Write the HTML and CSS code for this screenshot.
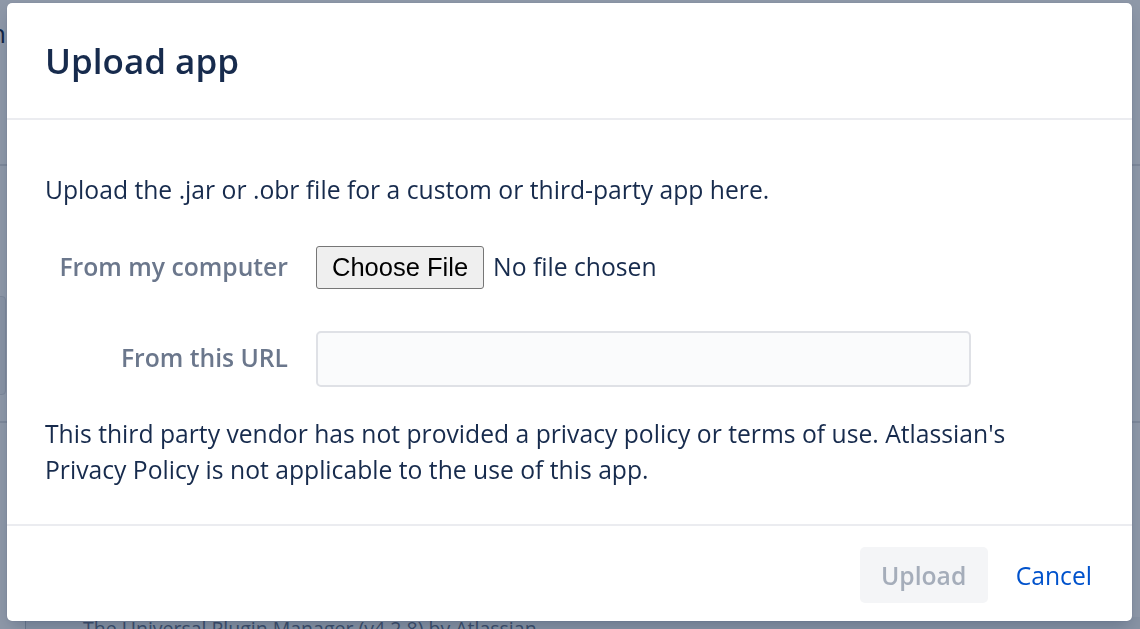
FILE: index.html
```html
<!DOCTYPE html>
<html lang="en">
<head>
<meta charset="utf-8">
<title>Upload app</title>
<link rel="stylesheet" href="styles.css">
</head>
<body>
<div class="page">
  <header class="page-header">
    <div class="page-title-wrap">
      <h1 class="page-title">Administration</h1>
    </div>
  </header>
  <main class="page-main">
    <div class="side-card"></div>
    <div class="main-rule"></div>
  </main>
  <footer class="page-footer">
    <p class="page-footer-text">The Universal Plugin Manager (v4.2.8) by Atlassian</p>
  </footer>
</div>
<div class="blanket"></div>
<section class="dialog" role="dialog" aria-labelledby="dlg-title">
  <header class="dialog-header">
    <h2 class="dialog-title" id="dlg-title">Upload app</h2>
  </header>
  <div class="dialog-body">
    <p class="intro">Upload the .jar or .obr file for a custom or third-party app here.</p>
    <form class="upload-form">
      <div class="form-row">
        <label class="form-label" for="file-input">From my computer</label>
        <input class="file-input" id="file-input" type="file">
      </div>
      <div class="form-row">
        <label class="form-label" for="url-input">From this URL</label>
        <input class="url-input" id="url-input" type="text">
      </div>
    </form>
    <p class="notice">This third party vendor has not provided a privacy policy or terms of use. Atlassian's Privacy Policy is not applicable to the use of this app.</p>
  </div>
  <footer class="dialog-footer">
    <button class="btn btn-disabled" type="button" disabled>Upload</button>
    <button class="btn btn-link" type="button">Cancel</button>
  </footer>
</section>
</body>
</html>
```

FILE: styles.css
```css
html, body {
  margin: 0;
  padding: 0;
  width: 1140px;
  height: 629px;
  overflow: hidden;
  background: #ffffff;
  font-family: "Open Sans", "Noto Sans", sans-serif;
  color: #172b4d;
}

/* underlying page */
.page {
  width: 1140px;
  height: 629px;
  display: flex;
  flex-direction: column;
}
.page-header {
  height: 146px;
  border-bottom: 2px solid #dfe1e6;
  padding-top: 18px;
  box-sizing: content-box;
}
.page-title-wrap {
  width: 6px;
  display: flex;
  justify-content: flex-end;
}
.page-title {
  margin: 0;
  font-size: 26px;
  font-weight: 500;
  line-height: 30px;
  white-space: nowrap;
  color: #172b4d;
}
.page-main {
  flex: 1;
  position: relative;
}
.side-card {
  position: absolute;
  left: -20px;
  top: 130px;
  width: 24px;
  height: 97px;
  border: 1px solid #dfe1e6;
  border-radius: 4px;
  background: #f4f5f7;
}
.main-rule {
  position: absolute;
  left: 0;
  right: 0;
  top: 255px;
  border-top: 2px solid #dfe1e6;
}
.page-footer {
  height: 12px;
  background: #f4f5f7;
  border-left: 1px solid #c1c7d0;
  margin-left: 25px;
  overflow: hidden;
}
.page-footer-text {
  margin: 0 0 0 57px;
  font-size: 19.5px;
  line-height: 24px;
  color: #6b778c;
}

/* blanket */
.blanket {
  position: fixed;
  inset: 0;
  background: rgba(9, 30, 66, 0.46);
}

/* dialog */
.dialog {
  position: absolute;
  left: 7px;
  top: 3px;
  width: 1125px;
  height: 618px;
  background: #ffffff;
  border-radius: 5px;
  display: flex;
  flex-direction: column;
  box-shadow: 0 0 1px rgba(9, 30, 66, 0.31), 0 8px 16px -4px rgba(9, 30, 66, 0.25);
}
.dialog-header {
  height: 115px;
  padding: 0 38px;
  display: flex;
  align-items: center;
  border-bottom: 2px solid #ebecf0;
}
.dialog-title {
  margin: 0;
  font-size: 35px;
  font-weight: 600;
  line-height: 40px;
  color: #172b4d;
}
.dialog-body {
  flex: 1;
  padding: 52px 38px 0;
  font-size: 24.7px;
  line-height: 36.6px;
}
.intro {
  margin: 0;
}
.upload-form {
  margin-top: 37px;
  display: flex;
  flex-direction: column;
  gap: 42px;
}
.form-row {
  display: grid;
  grid-template-columns: 243px 1fr;
  column-gap: 28px;
  align-items: center;
}
.form-label {
  text-align: right;
  font-weight: 600;
  color: #6b778c;
}
.file-input {
  font-family: "Open Sans", "Noto Sans", sans-serif;
  font-size: 24.7px;
  color: #172b4d;
  height: 43px;
  padding: 0;
}
.file-input::file-selector-button {
  font-family: "Liberation Sans", Arial, sans-serif;
  font-size: 25.5px;
  line-height: 29px;
  height: 43px;
  padding: 0 15px;
  margin-right: 9px;
  color: #000000;
  background: #efefef;
  border: 1px solid #767676;
  border-radius: 3px;
}
.url-input {
  width: 655px;
  height: 56px;
  box-sizing: border-box;
  border: 2px solid #dfe1e6;
  border-radius: 5px;
  background: #fafbfc;
  font: inherit;
  padding: 0 12px;
}
.notice {
  margin: 29px 0 0;
  max-width: 990px;
}
.dialog-footer {
  height: 92px;
  padding-top: 3px;
  border-top: 2px solid #ebecf0;
  display: flex;
  justify-content: flex-end;
  align-items: center;
  gap: 7px;
  padding-right: 19px;
}
.btn {
  height: 56px;
  padding: 0 21px;
  border: none;
  border-radius: 5px;
  font-family: "Open Sans", "Noto Sans", sans-serif;
  font-size: 24.7px;
  background: transparent;
}
.btn-disabled {
  width: 128px;
  background: #f4f5f7;
  color: #a5adba;
  font-weight: 600;
}
.btn-link {
  color: #0052cc;
  font-weight: 400;
  cursor: pointer;
}
```
